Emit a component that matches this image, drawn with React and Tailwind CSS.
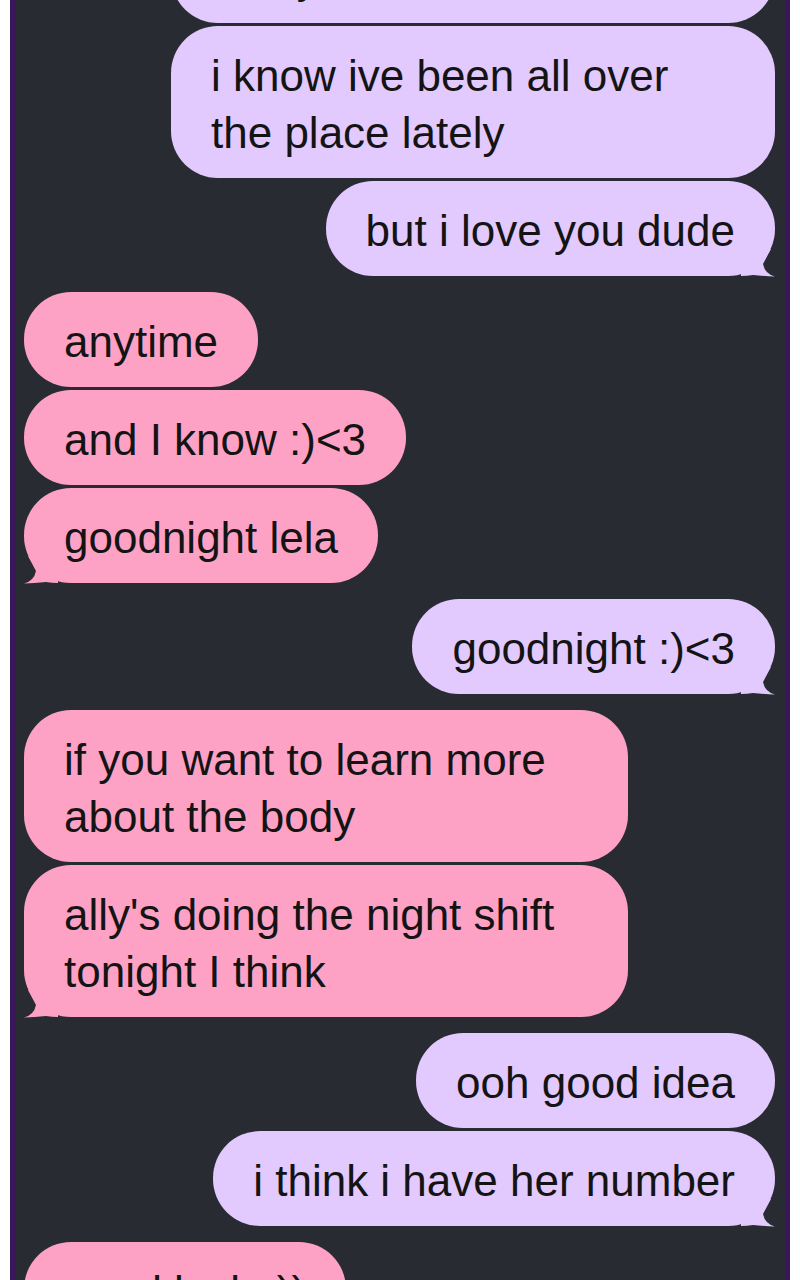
import React from "react";

const groups = [
  {
    side: "me",
    first: true,
    messages: [
      "thanks for talking with me today",
      "i know ive been all over the place lately",
      "but i love you dude",
    ],
  },
  {
    side: "them",
    messages: ["anytime", "and I know :)<3", "goodnight lela"],
  },
  { side: "me", messages: ["goodnight :)<3"] },
  {
    side: "them",
    messages: [
      "if you want to learn more about the body",
      "ally's doing the night shift tonight I think",
    ],
  },
  { side: "me", messages: ["ooh good idea", "i think i have her number"] },
  { side: "them", messages: ["good luck :))"] },
];

const Tail = ({ mine }) => (
  <svg
    width="36"
    height="28"
    viewBox="0 0 36 28"
    className={
      mine
        ? "absolute right-[-2px] bottom-[-1px]"
        : "absolute left-[-2px] bottom-[-1px] -scale-x-100"
    }
  >
    <path
      d="M0 0 L30 0 L22 15 Q24 25 34 27.5 Q24 27.2 12 26 Q6 27 0 27 Z"
      fill={mine ? "#e2c9fe" : "#fea2c5"}
    />
  </svg>
);

const Bubble = ({ text, mine, last }) => (
  <div
    className={`relative max-w-[604px] rounded-[47px] px-10 pt-[21px] pb-[17px] text-[44px] leading-[57px] text-[#141414] ${
      mine ? "self-end bg-[#e2c9fe]" : "self-start bg-[#fea2c5]"
    }`}
  >
    {last && <Tail mine={mine} />}
    <span className="relative">{text}</span>
  </div>
);

export default function App() {
  return (
    <div
      className="h-[1280px] overflow-hidden bg-white px-[10px]"
      style={{ fontFamily: '"Liberation Sans", Arial, sans-serif' }}
    >
      <div className="h-full border-l-[6px] border-r-[5px] border-[#3a165c] bg-[#292b33] pl-2 pr-[10px]">
        <div className="flex flex-col gap-4">
          {groups.map((g, i) => (
            <div
              key={i}
              className={`flex flex-col gap-[3px] ${
                g.first ? "-mt-[129px]" : ""
              }`}
            >
              {g.messages.map((m, j) => (
                <Bubble
                  key={j}
                  text={m}
                  mine={g.side === "me"}
                  last={j === g.messages.length - 1}
                />
              ))}
            </div>
          ))}
        </div>
      </div>
    </div>
  );
}
